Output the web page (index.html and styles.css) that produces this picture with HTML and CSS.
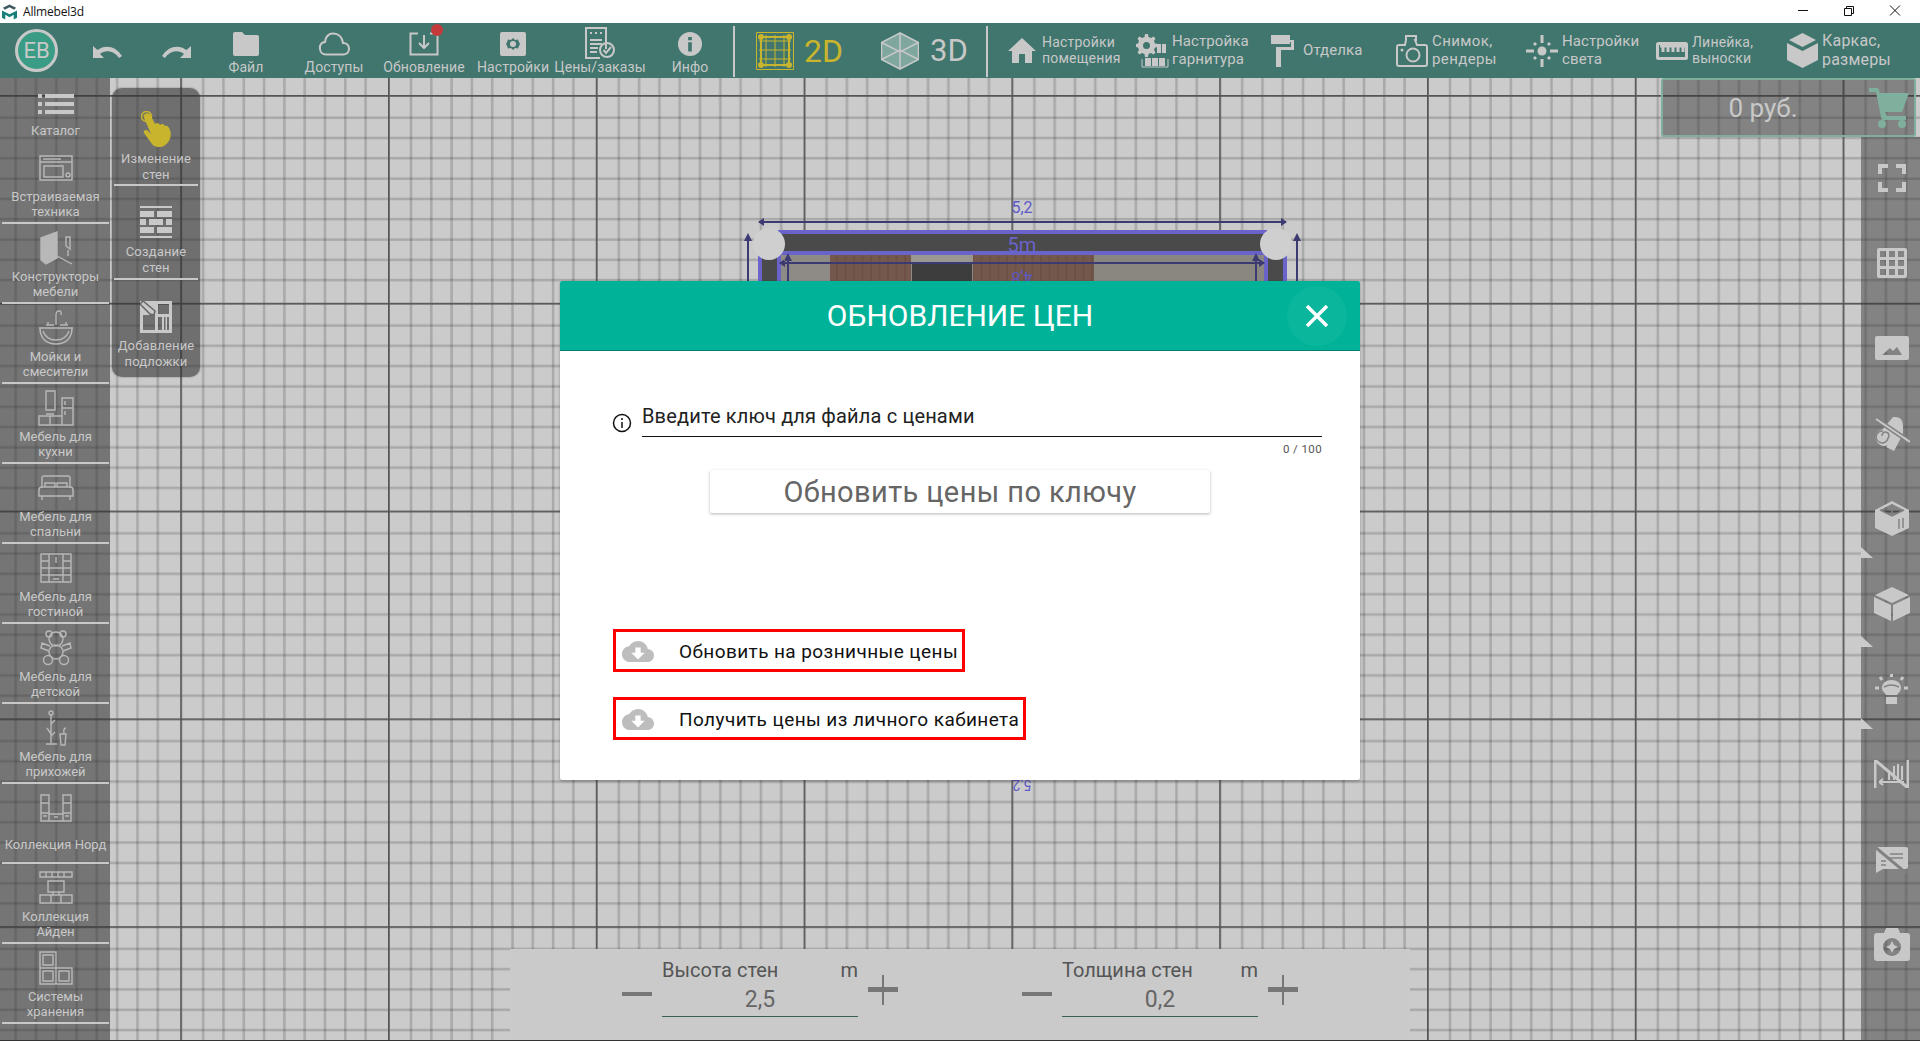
FILE: index.html
```html
<!DOCTYPE html>
<html lang="ru">
<head>
<meta charset="utf-8">
<title>Allmebel3d</title>
<link rel="stylesheet" href="styles.css">
</head>
<body>
<div class="app">
  <header class="titlebar">
    <div class="title-left">
      <svg class="app-logo" viewBox="0 0 16 16"><path class="logo-a" d="M8 0 15 3.500 13 5.500 8 3 3 5.500 1 3.500z"/><path class="logo-b" d="M0 6.500 8 10.500 16 6.500V14L12.500 16V11L8 13.500 3.500 11V16L0 14z"/></svg>
      <span class="app-name">Allmebel3d</span>
    </div>
    <div class="win-btns">
      <svg class="win-btn" viewBox="0 0 46 23"><path d="M18 10.500H28"/></svg>
      <svg class="win-btn" viewBox="0 0 46 23"><path d="M18.500 8.500H25.500V15.500H18.500zM20.500 8.500V6.500H27.500V13.500H25.500"/></svg>
      <svg class="win-btn" viewBox="0 0 46 23"><path d="M18 5.500 28 15.500M28 5.500 18 15.500"/></svg>
    </div>
  </header>

  <nav class="toolbar">
    <div class="avatar-cell"><div class="avatar">EB</div></div>
    <div class="icon-cell"><svg class="undo" viewBox="0 0 29 13"><path d="M0 1V13H11L7 9C12 5 20 5 26 13L29 11C23 1 12-1 4.500 5z"/></svg></div>
    <div class="icon-cell"><svg class="undo" viewBox="0 0 29 13"><path d="M29 1V13H18L22 9C17 5 9 5 3 13L0 11C6 1 17-1 24.500 5z"/></svg></div>

    <div class="tool-col col-file"><svg class="ic-26" viewBox="0 0 26 24"><path d="M0 2Q0 0 2 0H9L12 3H24Q26 3 26 5V22Q26 24 24 24H2Q0 24 0 22z"/></svg><span>Файл</span></div>
    <div class="tool-col col-access"><svg class="ic-26 wide" viewBox="0 0 32 24"><path class="outline" d="M8 22.500H25C33 22.500 33 11 25 11 24 3 18 1.500 15 1.500 10 1.500 7 6 7 10 0 10 0 22.500 8 22.500Z"/></svg><span>Доступы</span></div>
    <div class="tool-col col-update">
      <svg class="ic-26 wide" viewBox="0 0 30 24"><path class="outline" d="M9 1.500H1.500V22.500H28.500V1.500H21"/><path class="outline" d="M15 3V15M10 11 15 16 20 11"/></svg><span>Обновление</span><i class="dot"></i></div>
    <div class="tool-col col-settings"><svg class="ic-26" viewBox="0 0 26 24"><path d="M2 0H24Q26 0 26 2V22Q26 24 24 24H2Q0 24 0 22V2Q0 0 2 0zM13 6 11 8 8 7.500 7 10 6 12 7 14 8 16.500 11 16 13 18 15 16 18 16.500 19 14 20 12 19 10 18 7.500 15 8zM13 9A3 3 0 1 1 13 15 3 3 0 1 1 13 9z" fill-rule="evenodd"/></svg><span>Настройки</span></div>
    <div class="tool-col col-prices"><svg class="ic-price" viewBox="0 0 30 32"><path class="thin" d="M21 22V1H1V31H15"/><path class="thin" d="M5 13H17M5 17H17M5 21H13M5 25H12"/><path d="M5 5H7V7H5zM10 5H12V7H10zM15 5H17V7H15z"/><circle class="thin" cx="22" cy="23" r="7"/><path class="thin" d="M18.500 23 21 26 26 20"/></svg><span>Цены/заказы</span></div>
    <div class="tool-col col-info"><svg class="ic-26" viewBox="0 0 26 26"><ellipse cx="13" cy="13" rx="13" ry="13"/><path class="cut" d="M11 5.500H15V9H11zM11 11H15V21H11z"/></svg><span>Инфо</span></div>
    <div class="tb-sep sep-a"></div>

    <div class="mode mode-2d">
      <svg class="mode-ic" viewBox="0 0 38 38"><g class="g2d"><path d="M.5.5H37.500V37.500H.5zM3 9H35M3 18H35M3 27H35M10 3V35M19 3V35M28 3V35"/><path class="g2d-b" d="M5 5H33V33H5z"/></g><circle class="g2d-d" cx="5" cy="5" r="3"/><circle class="g2d-d" cx="33" cy="5" r="3"/><circle class="g2d-d" cx="5" cy="33" r="3"/><circle class="g2d-d" cx="33" cy="33" r="3"/></svg>
      <span>2D</span>
    </div>
    <div class="mode mode-3d">
      <svg class="mode-ic" viewBox="0 0 38 38"><path class="cube-f" d="M19 0 38 10V28L19 38 0 28V10z"/><path class="cube-s" d="M19 1 37.500 10.500V27.500L19 37 .5 27.500V10.500zM.5 10.500 19 20 37.500 10.500M19 20V37M.5 27.500 19 18 37.500 27.500M19 1V18"/></svg>
      <span>3D</span>
    </div>
    <div class="tb-sep sep-b"></div>

    <div class="tool-row row-room"><svg class="ic-house" viewBox="0 0 28 25"><path d="M14 0 28 13H24V25H17V16H11V25H4V13H0z"/></svg><span class="t14">Настройки<br>помещения</span></div>
    <div class="tool-row row-set"><svg class="ic-set" viewBox="0 0 34 34"><path d="M9 0H12L12.500 3 15 4 17.500 2.500 19.500 4.500 18 7 19 9.500 22 10V13L19 13.500 18 16 19.500 18.500 17.500 20.500 15 19 12.500 20 12 23H9L8.500 20 6 19 3.500 20.500 1.500 18.500 3 16 2 13.500 0 13V10L2 9.500 3 7 1.500 4.500 3.500 2.500 6 4 8.500 3zM10.500 8A3.500 3.500 0 1 0 10.500 15 3.500 3.500 0 1 0 10.500 8z" fill-rule="evenodd"/><path d="M21 10H25V19H21zM26 10H30V19H26zM9 24H15V32H9zM16 24H22V32H16zM23 24H29V32H23z"/><path class="hair" d="M6 25V33H32V25"/></svg><span class="t15">Настройка<br>гарнитура</span></div>
    <div class="tool-row row-finish"><svg class="ic-roller" viewBox="0 0 24 32"><path d="M0 0H19V5H23V15H10V32H5V12H20V7H19V9H0z"/></svg><span class="t15">Отделка</span></div>
    <div class="tool-row row-shot"><svg class="ic-cam" viewBox="0 0 32 32"><path class="thin" d="M10 1H20V5H19L21 10H29Q31 10 31 12V29Q31 31 29 31H3Q1 31 1 29V12Q1 10 3 10H9L10 5H10z"/><circle class="thin" cx="17" cy="20" r="6.500"/><circle cx="6" cy="15" r="1.500"/></svg><span class="t15 wide-t">Снимок,<br>рендеры</span></div>
    <div class="tool-row row-light"><svg class="ic-cam" viewBox="0 0 32 32"><circle cx="16" cy="16" r="4.500"/><path class="thick" d="M16 0V8M16 24V32M0 16H8M24 16H32M8 8 10 10M24 8 22 10M8 24 10 22M24 24 22 22"/></svg><span class="t15">Настройки<br>света</span></div>
    <div class="tool-row row-ruler"><svg class="ic-ruler" viewBox="0 0 32 18"><path class="thick" d="M2.500 1.500H29.500Q30.500 1.500 30.500 2.500V15.500Q30.500 16.500 29.500 16.500H2.500Q1.500 16.500 1.500 15.500V2.500Q1.500 1.500 2.500 1.500z"/><path class="thick" d="M7 4V10M12 4V10M17 4V10M22 4V10M27 4V10M4 4H29"/></svg><span class="t14">Линейка,<br>выноски</span></div>
    <div class="tool-row row-frame"><svg class="ic-cube" viewBox="0 0 31 35"><path d="M15.500 0 29 7 15.500 14 2 7z"/><path d="M0 10 15.500 18 31 10V27L15.500 35 0 27z"/></svg><span class="t16">Каркас,<br>размеры</span></div>
  </nav>

  <main class="stage">
    <svg class="board" width="1920" height="962">
      <defs>
        <pattern id="tile" x="180.200" y="17" width="207.800" height="207.800" patternUnits="userSpaceOnUse">
          <path class="minor" d="M23 0V207.800M43.300 0V207.800M63.600 0V207.800M83.900 0V207.800M104.200 0V207.800M124.500 0V207.800M144.800 0V207.800M165.100 0V207.800M185.400 0V207.800"/>
          <path class="minor" d="M0 22.700H207.800M0 43H207.800M0 63.300H207.800M0 83.600H207.800M0 103.900H207.800M0 124.200H207.800M0 144.500H207.800M0 164.800H207.800M0 185.100H207.800"/>
          <path class="major" d="M0 0V207.800M0 0H207.800"/>
        </pattern>
        <pattern id="wood" width="17" height="40" patternUnits="userSpaceOnUse">
          <rect class="wood-a" width="17" height="40"/>
          <path class="wood-b" d="M4 0V40M12.500 0V40"/>
        </pattern>
      </defs>
      <rect width="1920" height="962" fill="url(#tile)"/>
      <g class="plan">
        <rect class="floor-c" x="778" y="175" width="490" height="40"/>
        <rect x="830" y="175" width="81" height="40" fill="url(#wood)"/>
        <rect class="floor-g" x="911" y="175" width="62" height="10"/>
        <rect class="floor-d" x="912" y="185" width="60" height="30"/>
        <rect x="973" y="175" width="121" height="40" fill="url(#wood)"/>
        <rect class="floor-l" x="1094" y="175" width="172" height="40"/>
        <rect class="wall-top" x="780" y="154" width="485" height="21"/>
        <rect class="wall-side" x="760" y="170" width="19" height="50"/>
        <rect class="wall-side" x="1266" y="170" width="19" height="50"/>
        <path class="dim" d="M759 144H1286M780 185H1264M748 158V220M1297 158V220M788 178V220M1256 178V220"/>
        <path class="arrow" d="M758 144 764 140V148zM1287 144 1281 140V148zM779 185 785 181V189zM1265 185 1259 181V189zM748 155 744 163H752zM1297 155 1293 163H1301zM788 175 784 183H792zM1256 175 1252 183H1260z"/>
        <circle class="corner" cx="769" cy="166" r="16"/>
        <circle class="corner" cx="1276" cy="166" r="16"/>
        <text class="dim-t" x="1022" y="135">5,2</text>
        <text class="dim-w" x="1022" y="174">5m</text>
        <text class="dim-t" transform="rotate(180 1022 200)" x="1022" y="206">4,8</text>
        <text class="dim-s" transform="rotate(180 1022 708)" x="1022" y="714">5.2</text>
      </g>
    </svg>

    <aside class="catalog">
      <div class="cat first"><svg class="ci" width="36" height="20" viewBox="0 0 36 20"><path class="f" d="M0 0H4V4H0zM7 0H36V4H7zM0 8H4V12H0zM7 8H36V12H7zM0 16H4V20H0zM7 16H36V20H7z"/></svg><span>Каталог</span></div>
      <div class="cat"><svg class="ci" width="34" height="26" viewBox="0 0 34 26"><path d="M1 1H33V25H1zM1 7H33M5 11H24V22H5zM4 4H22"/><circle cx="29" cy="20" r="2"/></svg><span>Встраиваемая<br>техника</span></div>
      <div class="cat"><svg class="ci" width="32" height="36" viewBox="0 0 32 36"><path class="fd" d="M1 8 17 2V28L6 34 1 30z"/><path d="M9 5V32M26 7V16L30 19V7zM28 20V26M17 26 32 34"/></svg><span>Конструкторы<br>мебели</span></div>
      <div class="cat"><svg class="ci" width="36" height="36" viewBox="0 0 36 36"><path d="M1 18H35M2 18C2 28 8 34 18 34S34 28 34 18M5 21C7 27 11 30 18 30S29 27 31 21M18 15V5Q18 1 21 1T23 5M8 15H16M10 12V15M28 12V15M22 15H30"/></svg><span>Мойки и<br>смесители</span></div>
      <div class="cat"><svg class="ci" width="36" height="36" viewBox="0 0 36 36"><path d="M8 1H17V20H8zM24 8H35V35H24zM24 18H35M1 26H24V35H1zM12 26V35M27 11V15M27 21V25M8 24H16"/></svg><span>Мебель для<br>кухни</span></div>
      <div class="cat"><svg class="ci" width="36" height="26" viewBox="0 0 36 26"><path d="M4 12V3Q4 1 6 1H30Q32 1 32 3V12M7 12V8H17V12M19 12V8H29V12M1 15Q1 12 4 12H32Q35 12 35 15V21H1zM4 21V25M32 21V25"/></svg><span>Мебель для<br>спальни</span></div>
      <div class="cat"><svg class="ci" width="32" height="30" viewBox="0 0 32 30"><path d="M1 1H31V29H1zM9 1V29M23 1V29M1 8H9M1 15H9M1 22H31M23 8H31M23 15H31M9 15H23M16 4V10M13 26H19"/></svg><span>Мебель для<br>гостиной</span></div>
      <div class="cat"><svg class="ci" width="32" height="36" viewBox="0 0 32 36"><circle cx="16" cy="9" r="7"/><circle cx="9" cy="4" r="3"/><circle cx="23" cy="4" r="3"/><circle cx="16" cy="22" r="7"/><circle cx="8" cy="30" r="4.500"/><circle cx="24" cy="30" r="4.500"/><path d="M10 16 2 13 1 18 9 21M22 16 30 13 31 18 23 21"/></svg><span>Мебель для<br>детской</span></div>
      <div class="cat"><svg class="ci" width="22" height="36" viewBox="0 0 22 36"><circle cx="6" cy="3" r="2"/><path d="M6 5V33M6 14 10 10M6 24 2 18M6 26 10 22M1 34H12M15 24H21L20 35H16zM19 24Q18 18 21 18"/></svg><span>Мебель для<br>прихожей</span></div>
      <div class="cat"><svg class="ci" width="32" height="28" viewBox="0 0 32 28"><path d="M1 1H9V27H1zM23 1H31V27H23zM1 9H9M1 19H9M23 9H31M23 19H31M9 20H23V27H9zM3 22H7M25 22H29M14 23H18"/></svg><span>Коллекция Норд</span></div>
      <div class="cat"><svg class="ci" width="34" height="34" viewBox="0 0 34 34"><path d="M1 1H33V6H1zM7 1V6M13 1V6M19 1V6M25 1V6M9 10H25V21H9zM14 21V24M20 21V24M1 24H33V32H1zM12 24V32M22 24V32M4 32V33M30 32V33"/></svg><span>Коллекция<br>Айден</span></div>
      <div class="cat"><svg class="ci" width="34" height="34" viewBox="0 0 34 34"><path d="M1 1H17V17H1zM4 4H14V14H4zM1 17H17V33H1zM4 20H14V30H4zM17 17H33V33H17zM20 20H30V30H20z"/></svg><span>Системы<br>хранения</span></div>
      <div class="cat cat-cut"><svg class="ci" width="34" height="8" viewBox="0 0 34 8"><path d="M1 1 4 7M9 7H33"/></svg></div>
    </aside>

    <aside class="wallbar">
      <div class="wb-item wb-one"><svg class="ci-h" width="32" height="36" viewBox="0 0 32 36"><path d="M4 4C6 1 10 2 11 5L15 13C17 11 19 12 20 14 22 12 24 13 25 15 27 14 29 16 30 19 32 25 30 31 24 35 20 37 14 36 12 33L4 22C3 19 6 18 8 20L11 23 5 9C4 7 3 6 4 4z"/><circle class="rings" cx="6.500" cy="5.500" r="5"/></svg><span>Изменение<br>стен</span></div>
      <div class="wb-item wb-two"><svg class="ci-w" width="32" height="32" viewBox="0 0 32 32"><path d="M0 0H32V2H0zM0 5H14V11H0zM17 5H32V11H17zM0 13H6V19H0zM9 13H23V19H9zM26 13H32V19H26zM0 21H14V27H0zM17 21H32V27H17zM0 30H32V32H0z"/></svg><span>Создание<br>стен</span></div>
      <div class="wb-item wb-three"><svg class="ci-w ci-tight" width="32" height="32" viewBox="0 0 32 32"><path d="M0 0H32V32H0zM3 17V29H15V17zM18 16V29H22V16zM24 16V29H25.500V16zM27 16V29H29V16zM18 3V13H29V3zM3 14H15L15 17H3z" fill-rule="evenodd"/><path class="pen" d="M0 3 3 0 15 10 14 14 10 13z"/></svg><span>Добавление<br>подложки</span></div>
    </aside>

    <div class="spacer"></div>

    <aside class="sidebar">
      <div class="sb"><svg width="28" height="28" viewBox="0 0 28 28"><path d="M0 0H10V4H4V10H0zM18 0H28V10H24V4H18zM0 18H4V24H10V28H0zM24 18H28V28H18V24H24z"/></svg></div>
      <div class="sb"><svg width="30" height="30" viewBox="0 0 30 30"><path d="M2 0H28Q30 0 30 2V28Q30 30 28 30H2Q0 30 0 28V2Q0 0 2 0zM3 3V9H9V3zM12 3V9H18V3zM21 3V9H27V3zM3 12V18H9V12zM12 12V18H18V12zM21 12V18H27V12zM3 21V27H9V21zM12 21V27H18V21zM21 21V27H27V21z" fill-rule="evenodd"/></svg></div>
      <div class="sb"><svg width="34" height="24" viewBox="0 0 34 24"><path d="M2 0H32Q34 0 34 2V22Q34 24 32 24H2Q0 24 0 22V2Q0 0 2 0zM7 19H27L22 11 18 15 15 12z" fill-rule="evenodd"/></svg></div>
      <div class="sb"><svg width="36" height="34" viewBox="0 0 36 34"><path d="M19 0H21Q29 0 29 9V17L20 34 12 30 14 28A8.500 8.500 0 1 1 9 12z"/><path class="sb-cut" d="M9 14A6 6 0 1 0 14 21 3.500 3.500 0 1 0 8 19"/><path class="sb-gap" d="M2 2 36 25"/><path class="sb-line" d="M2 2 36 25"/></svg></div>
      <div class="sb"><svg width="34" height="35" viewBox="0 0 34 35"><path fill-rule="evenodd" d="M17 0 34 9V27L17 35 0 27V9zM17 3 5 9 17 15 29 9z"/><path class="sb-cut" d="M17 3V15M5 9 17 15 29 9M24 18V28M28 17V27"/></svg></div>
      <div class="sb"><svg width="36" height="34" viewBox="0 0 36 34"><path d="M18 0 35 8 18 16 1 8zM0 10 17 18V34L0 26zM36 10 19 18V34L36 26z"/></svg></div>
      <div class="sb"><svg width="33" height="30" viewBox="0 0 33 30"><path d="M16.500 6C10 6 7 10 7 14 7 17 9 18 11 21H22C24 18 26 17 26 14 26 10 23 6 16.500 6zM11 23H22V30H11z"/><path class="sb-thick" d="M16.500 0V3M5 3 7 6M28 3 26 6M0 14H4M29 14H33"/><path class="sb-cut" d="M9 13Q16 9 24 13"/></svg></div>
      <div class="sb"><svg width="35" height="28" viewBox="0 0 35 28"><path class="sb-thick" d="M1 0V28M34 0V28M1 0 34 28"/><path class="sb-two" d="M5 22H30M5 22 9 19M5 22 9 25M15 12V20M20 6V20M24 4V20M28 6V20"/></svg></div>
      <div class="sb"><svg width="34" height="26" viewBox="0 0 34 26"><path d="M3 0H31Q33 0 33 2V20Q33 22 31 22H8L1 26V2Q1 0 3 0z"/><path class="sb-cut" d="M15 7H28M15 11H28M6 14H11M6 18H11"/><path class="sb-slash" d="M0 0 31 26"/></svg></div>
      <div class="sb"><svg width="36" height="33" viewBox="0 0 36 33"><path fill-rule="evenodd" d="M3 5H10L12 0H24L26 5H33Q36 5 36 8V30Q36 33 33 33H3Q0 33 0 30V8Q0 5 3 5zM18 10A9 9 0 1 0 18 28 9 9 0 1 0 18 10z"/><path d="M18 13 20 17 24 19 20 21 18 25 16 21 12 19 16 17z"/></svg></div>
      <i class="notch notch-a"></i><i class="notch notch-b"></i><i class="notch notch-c"></i>
    </aside>

    <div class="price">
      <span class="price-v">0 руб.</span>
      <svg class="cart" width="40" height="40" viewBox="0 0 40 40"><path d="M0 0H9L11 5H40L33 24H16L18 28H37V32H13L12 29 7 4H0z"/><circle cx="13" cy="36" r="4"/><circle cx="33" cy="36" r="4"/></svg>
    </div>

    <section class="wallform">
      <div class="stepper">
        <i class="minus"></i>
        <div class="field">
          <div class="field-top"><span>Высота стен</span><span>m</span></div>
          <div class="field-val">2,5</div>
        </div>
        <i class="plus"></i>
      </div>
      <div class="stepper">
        <i class="minus"></i>
        <div class="field">
          <div class="field-top"><span>Толщина стен</span><span>m</span></div>
          <div class="field-val">0,2</div>
        </div>
        <i class="plus"></i>
      </div>
    </section>

    <section class="modal">
      <header class="modal-head">
        <h1>ОБНОВЛЕНИЕ ЦЕН</h1>
        <div class="close"><svg width="24" height="22" viewBox="0 0 24 22"><path d="M2 1 22 21M22 1 2 21"/></svg></div>
      </header>
      <div class="modal-body">
        <div class="key-row">
          <svg class="info" width="20" height="20" viewBox="0 0 20 20"><circle cx="10" cy="10" r="8.500"/><path d="M10 9V15M10 5V7"/></svg>
          <div class="key-field">
            <div class="key-input">Введите ключ для файла с ценами</div>
            <div class="key-count">0 / 100</div>
          </div>
        </div>
        <div class="key-btn-wrap"><button class="key-btn">Обновить цены по ключу</button></div>
        <div class="links">
          <div class="link"><svg width="32" height="21" viewBox="0 4 24 16" preserveAspectRatio="none"><path fill-rule="evenodd" d="M19.350 10.040C18.670 6.590 15.640 4 12 4 9.110 4 6.600 5.640 5.350 8.040 2.340 8.360 0 10.910 0 14c0 3.310 2.690 6 6 6h13c2.760 0 5-2.240 5-5 0-2.640-2.050-4.780-4.650-4.960zM17 13l-5 5-5-5h3V9h4v4h3z"/></svg><span>Обновить на розничные цены</span></div>
          <div class="link"><svg width="32" height="21" viewBox="0 4 24 16" preserveAspectRatio="none"><path fill-rule="evenodd" d="M19.350 10.040C18.670 6.590 15.640 4 12 4 9.110 4 6.600 5.640 5.350 8.040 2.340 8.360 0 10.910 0 14c0 3.310 2.690 6 6 6h13c2.760 0 5-2.240 5-5 0-2.640-2.050-4.780-4.650-4.960zM17 13l-5 5-5-5h3V9h4v4h3z"/></svg><span>Получить цены из личного кабинета</span></div>
        </div>
      </div>
    </section>
  </main>
</div>
</body>
</html>
```
FILE: styles.css
```css
* { box-sizing: border-box; }
html, body { margin: 0; padding: 0; height: 100%; overflow: hidden; }
body { font-family: Roboto, "Liberation Sans", sans-serif; background: #cbcbcb; }
.app { width: 1920px; height: 1041px; display: flex; flex-direction: column; overflow: hidden; border-bottom: 1px solid #333; }

/* title bar */
.titlebar { height: 23px; flex: none; background: #fff; display: flex; justify-content: space-between; align-items: center; }
.title-left { display: flex; align-items: center; padding-left: 2px; gap: 6px; }
.app-logo { width: 15px; height: 16px; }
.logo-a { fill: #3e5a60; }
.logo-b { fill: #17807a; }
.app-name { font-family: "Open Sans", sans-serif; font-size: 12px; color: #111; letter-spacing: -.2px; }
.win-btns { display: flex; margin-right: 2px; }
.win-btn { width: 46px; height: 23px; fill: none; stroke: #111; stroke-width: 1; }

/* toolbar */
.toolbar { height: 55px; flex: none; background: #40766e; color: #c8c8c8; display: flex; align-items: center; fill: #c8c8c8; }
.avatar-cell { width: 73px; display: flex; justify-content: center; }
.avatar { width: 43px; height: 43px; border-radius: 50%; border: 3px solid #c8c8c8; background: #3a9c84; display: flex; align-items: center; justify-content: center; font-size: 22px; }
.icon-cell { width: 69px; display: flex; justify-content: center; margin-top: 1px; }
.undo { width: 29px; height: 13px; }
.tool-col { height: 55px; position: relative; display: flex; flex-direction: column; align-items: center; flex: none; font-size: 14px; letter-spacing: .1px; white-space: nowrap; }
.tool-col svg { position: absolute; left: 50%; transform: translateX(-50%); top: 9px; }
.tool-col span { margin-top: 35px; line-height: 18px; }
.ic-26 { width: 26px; height: 24px; }
.ic-26.wide { width: 32px; height: 24px; }
.ic-price { width: 30px; height: 32px; }
.tool-col .ic-price { top: 4px; }
.col-file { width: 70px; }
.col-access { width: 106px; }
.col-update { width: 74px; }
.col-settings { width: 104px; }
.col-prices { width: 70px; }
.col-info { width: 70px; margin-left: 20px; }
.outline, .thin { fill: none; stroke: #c8c8c8; stroke-width: 2; }
.hair { fill: none; stroke: #c8c8c8; stroke-width: 1; }
.thick { fill: none; stroke: #c8c8c8; stroke-width: 3; }
.cut { fill: #40766e; }
.dot { position: absolute; left: 44px; top: 1px; width: 12px; height: 12px; border-radius: 50%; background: #c43a3a; }
.tb-sep { width: 2px; height: 51px; background: #c8c8c8; flex: none; }
.sep-a { margin-left: 8px; margin-top: 2px; }
.sep-b { margin-top: 2px; }
.mode { display: flex; align-items: center; gap: 10px; flex: none; }
.mode-2d { margin-left: 21px; width: 125px; color: #c9b52d; font-size: 32px; }
.mode-3d { width: 105px; font-size: 31px; gap: 11px; }
.mode-ic { width: 38px; height: 38px; flex: none; }
.g2d path { fill: none; stroke: #c9b52d; stroke-width: 1; }
.g2d .g2d-b { stroke-width: 2; }
.g2d-d { fill: #c9b52d; }
.cube-f { fill: #7fa79f; }
.cube-s { fill: none; stroke: #c8c8c8; stroke-width: 1.500; }
.tool-row { display: flex; align-items: center; gap: 5px; flex: none; height: 55px; white-space: nowrap; }
.tool-row span { margin-top: -1px; }
.t14 { font-size: 14px; line-height: 16px; letter-spacing: .2px; }
.t15 { font-size: 15px; line-height: 18px; letter-spacing: .1px; }
.wide-t { letter-spacing: .4px; }
.t16 { font-size: 16px; line-height: 19px; letter-spacing: .2px; }
.row-room { width: 128px; margin-left: 20px; gap: 6px; }
.row-set { width: 135px; gap: 2px; }
.row-finish { width: 125px; gap: 8px; }
.row-shot { width: 130px; gap: 4px; }
.row-light { width: 130px; gap: 4px; }
.row-ruler { width: 131px; gap: 4px; }
.row-frame { gap: 4px; }
.ic-house { width: 28px; height: 25px; }
.ic-set { width: 34px; height: 34px; }
.ic-roller { width: 24px; height: 32px; }
.ic-cam { width: 32px; height: 32px; }
.ic-ruler { width: 32px; height: 18px; }
.ic-cube { width: 31px; height: 35px; }

/* stage */
.stage { flex: 1; position: relative; display: flex; overflow: hidden; background: #cbcbcb; }
.board { position: absolute; left: 0; top: 0; }
.minor { fill: none; stroke: #000; stroke-opacity: .17; stroke-width: 2.500; }
.major { fill: none; stroke: #555; stroke-width: 3.500; }
.wood-a { fill: #75584d; }
.wood-b { fill: none; stroke: #6e5145; stroke-width: 2; }
.floor-c { fill: #8e8b86; }
.floor-g { fill: #9a9690; }
.floor-d { fill: #3d3d3d; }
.floor-l { fill: #8a8781; }
.wall-top { fill: #4a4a4a; stroke: #6a63c9; stroke-width: 4; }
.wall-side { fill: #4a4a4a; stroke: #6a63c9; stroke-width: 4; }
.dim { fill: none; stroke: #3b3a72; stroke-width: 2; }
.arrow { fill: #3b3a72; }
.corner { fill: #cfcfcf; }
.dim-t { font-size: 16px; fill: #5b58c8; text-anchor: middle; }
.dim-w { font-size: 20px; fill: #6a63c9; text-anchor: middle; }
.dim-s { font-size: 14px; fill: #5b58c8; text-anchor: middle; }

/* catalog */
.catalog { position: relative; width: 110px; flex: none; background: rgba(50, 50, 50, .56); color: #c8c8c8; display: flex; flex-direction: column; overflow: hidden; }
.cat { height: 80px; flex: none; margin: 0 1px 0 2px; border-bottom: 2px solid #c8c8c8; display: flex; flex-direction: column; align-items: center; position: relative; text-align: center; font-size: 13px; line-height: 15px; white-space: nowrap; }
.cat.first { height: 66px; border-bottom: 0; }
.cat .ci { position: absolute; top: 24px; left: 50%; transform: translate(-50%, -50%); fill: none; stroke: #b8b8b8; stroke-width: 1.400; }
.cat.first .ci { top: 25.500px; }
.cat-cut .ci { margin-top: -5px; }
.cat .ci .f { fill: #c8c8c8; stroke: none; }
.cat .ci .fd { fill: #b8b8b8; }
.cat span { margin-top: 45px; height: 30px; display: flex; align-items: center; }
.cat.first span { margin-top: 38px; }

/* wall tools */
.wallbar { position: absolute; left: 112px; top: 10px; width: 88px; height: 289px; background: rgba(50, 50, 50, .6); border-radius: 10px; color: #c8c8c8; display: flex; flex-direction: column; align-items: center; font-size: 13px; line-height: 16px; letter-spacing: .15px; text-align: center; box-shadow: 0 0 2px rgba(0, 0, 0, .4); }
.wb-item { width: 84px; display: flex; flex-direction: column; align-items: center; flex: none; }
.wb-one { height: 98px; padding-top: 23px; border-bottom: 2px solid #c8c8c8; }
.wb-two { height: 94px; padding-top: 20px; border-bottom: 2px solid #c8c8c8; }
.wb-three { height: 97px; padding-top: 21px; }
.ci-h { fill: #c9b52d; margin-bottom: 4px; }
.rings { fill: none; stroke: #c9b52d; stroke-width: 1.500; }
.ci-w { fill: #c8c8c8; margin-bottom: 6px; }
.ci-tight { margin-bottom: 5px; }
.pen { fill: #c8c8c8; stroke: #666; stroke-width: 1.500; }

.spacer { flex: 1; }

/* right sidebar */
.sidebar { position: relative; width: 59px; flex: none; margin-top: 59px; background: rgba(50, 50, 50, .47); display: flex; flex-direction: column; padding-top: 0; fill: #c8c8c8; }
.sb { height: 85.200px; flex: none; display: flex; align-items: center; justify-content: center; margin-left: 2px; }
.sb:first-child { margin-top: -1.600px; }
.sb-cut { fill: none; stroke: #828282; stroke-width: 1.500; }
.sb-gap { stroke: #828282; stroke-width: 5; fill: none; }
.sb-line { stroke: #c8c8c8; stroke-width: 2; fill: none; }
.sb-thick { fill: none; stroke: #c8c8c8; stroke-width: 3; }
.sb-two { fill: none; stroke: #c8c8c8; stroke-width: 2; }
.sb-slash { fill: none; stroke: #828282; stroke-width: 3; }
.notch { position: absolute; left: 0; width: 0; height: 0; border-top: 11px solid transparent; border-left: 12px solid #cbcbcb; }
.notch-a { top: 410px; }
.notch-b { top: 499px; }
.notch-c { top: 581px; }

/* price */
.price { position: absolute; left: 1661px; top: 0; width: 255px; height: 59px; border: 2px solid #7fae9d; border-radius: 3px; background: rgba(50, 50, 50, .47); display: flex; align-items: center; }
.price-v { position: absolute; left: 60px; width: 80px; text-align: center; font-size: 26px; color: #c8c8c8; white-space: nowrap; }
.cart { position: absolute; right: 5px; top: 8px; fill: #7fb09e; }

/* bottom form */
.wallform { position: absolute; left: 510px; bottom: 0; width: 900px; height: 91px; background: #cacaca; display: flex; justify-content: center; gap: 124px; padding-top: 11px; }
.stepper { display: flex; gap: 10px; align-items: flex-start; color: #555; }
.minus { width: 30px; height: 4px; background: #777; margin-top: 32px; flex: none; }
.plus { width: 30px; height: 30px; margin-top: 15px; flex: none; position: relative; }
.plus::before { content: ""; position: absolute; left: 0; right: 0; top: 12px; height: 5px; background: #777; }
.plus::after { content: ""; position: absolute; left: 14px; top: 0; bottom: 0; width: 2px; background: #777; }
.field { width: 196px; height: 57px; border-bottom: 1px solid #3c5f55; }
.field-top { display: flex; justify-content: space-between; font-size: 20px; line-height: 20px; }
.field-val { text-align: center; font-size: 23px; line-height: 26px; color: #666; margin-top: 7px; }

/* modal */
.modal { position: absolute; left: 560px; top: 203px; width: 800px; height: 499px; background: #fff; box-shadow: 0 1px 3px rgba(0, 0, 0, .3); border-radius: 2px; }
.modal-head { height: 70px; background: #00b398; border-bottom: 1px solid #0b7d6c; border-radius: 2px 2px 0 0; display: flex; align-items: center; justify-content: center; position: relative; }
.modal-head h1 { margin: 0; font-size: 30px; font-weight: 400; color: #fff; line-height: 70px; }
.close { position: absolute; right: 13px; top: 5px; width: 60px; height: 60px; border-radius: 50%; background: #0ab69c; display: flex; align-items: center; justify-content: center; }
.close svg { fill: none; stroke: #fff; stroke-width: 3.500; }
.modal-body { display: flex; flex-direction: column; }
.key-row { display: flex; align-items: flex-start; margin: 50px 38px 0 52px; gap: 10px; }
.info { fill: none; stroke: #111; stroke-width: 1.500; margin-top: 12px; flex: none; }
.key-field { flex: 1; }
.key-input { height: 36px; font-size: 20px; line-height: 30px; letter-spacing: .16px; color: #222; border-bottom: 1.500px solid #111; white-space: nowrap; }
.key-count { text-align: right; font-size: 11.500px; line-height: 24px; color: #555; letter-spacing: .4px; }
.key-btn-wrap { display: flex; justify-content: center; margin-top: 9px; }
.key-btn { width: 500px; height: 43px; border: 0; background: #fff; box-shadow: 0 1px 3px rgba(0, 0, 0, .3); border-radius: 2px; font-family: Roboto, sans-serif; font-size: 29px; letter-spacing: .4px; color: #666; padding: 0; }
.links { display: flex; flex-direction: column; align-items: flex-start; gap: 25px; margin: 116px 0 0 53px; }
.link { height: 43px; border: 3px solid #f00; display: flex; align-items: center; padding: 1px 4px 0 6px; gap: 25px; font-size: 19px; color: #111; letter-spacing: .42px; white-space: nowrap; }
.link svg { fill: #bdbdbd; flex: none; }
```
